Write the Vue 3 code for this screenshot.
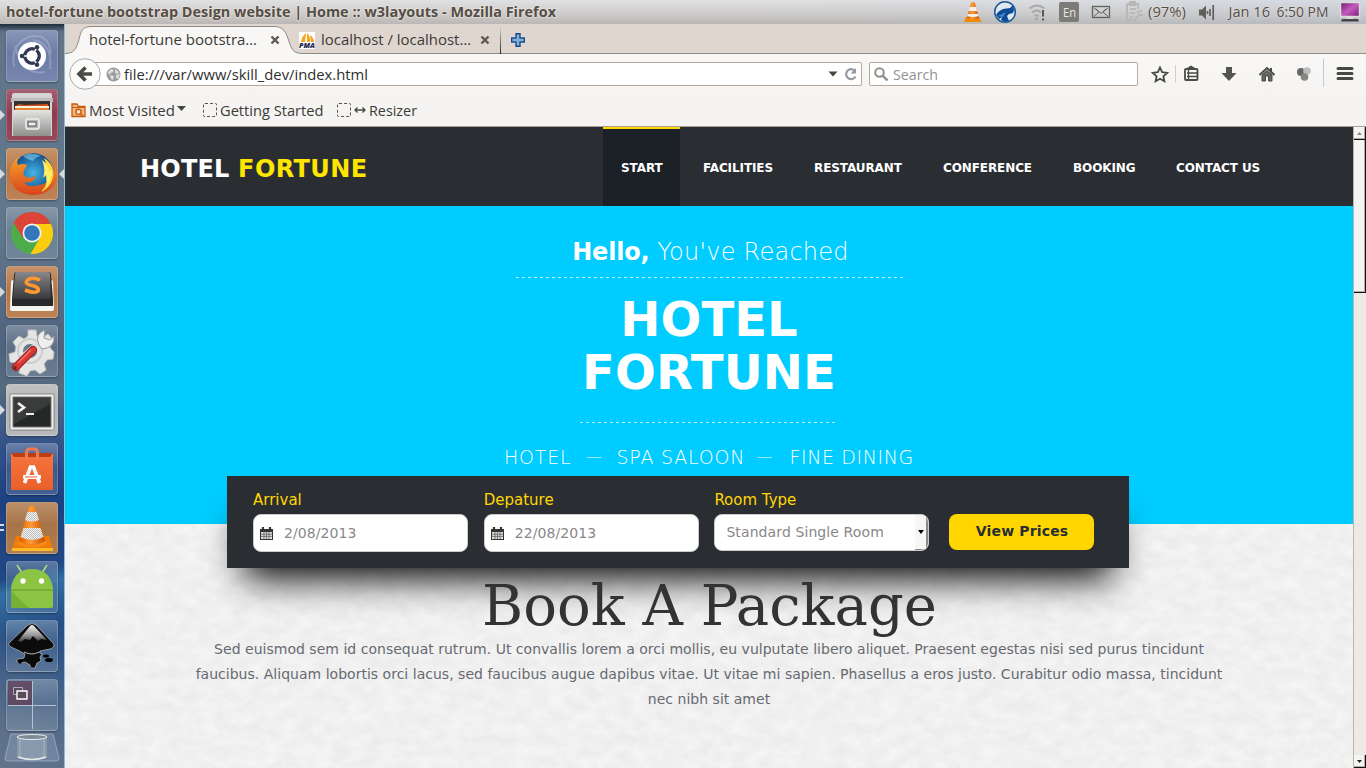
<script setup>
import { h } from 'vue'

const Fit = ({ text, w, size = 14.5, color = '#3c3b37', bold = false, ht = 20, halo = false }) =>
  h('svg', { width: w + 2, height: ht, style: { flex: 'none', display: 'block', overflow: 'visible' } }, [
    h('text', {
      x: 0, y: ht / 2 + 5, textLength: w, lengthAdjust: 'spacingAndGlyphs',
      fill: color, 'font-size': size, 'font-weight': bold ? 700 : 400,
      'font-family': '"Open Sans", "Noto Sans", sans-serif',
      ...(halo ? { stroke: '#f3e9e2', 'stroke-width': 1.6, 'paint-order': 'stroke', 'stroke-opacity': 0.6 } : {}),
    }, text),
  ])
Fit.props = ['text', 'w', 'size', 'color', 'bold', 'ht', 'halo']

const nav = ['START', 'FACILITIES', 'RESTAURANT', 'CONFERENCE', 'BOOKING', 'CONTACT US']
const navWidths = [77, 106, 124, 125, 98, 121]
const copy = [
  'Sed euismod sem id consequat rutrum. Ut convallis lorem a orci mollis, eu vulputate libero aliquet. Praesent egestas nisi sed purus tincidunt',
  'faucibus. Aliquam lobortis orci lacus, sed faucibus augue dapibus vitae. Ut vitae mi sapien. Phasellus a eros justo. Curabitur odio massa, tincidunt',
  'nec nibh sit amet',
]
</script>

<template>
  <div class="screen">
    <header class="panel">
      <Fit class="title" text="hotel-fortune bootstrap Design website | Home :: w3layouts - Mozilla Firefox" :w="550" :size="14" color="#544e46" :bold="true" :halo="true" />
      <svg class="tray" width="406" height="24" viewBox="960 0 406 24">
        <defs>
          <linearGradient id="cone" x1="0" x2="1"><stop offset="0" stop-color="#d95a00" /><stop offset=".45" stop-color="#ff9b36" /><stop offset="1" stop-color="#c64d00" /></linearGradient>
          <linearGradient id="monitor" x1="0" x2="1" y2="1"><stop offset="0" stop-color="#6d1a68" /><stop offset=".5" stop-color="#c45cc0" /><stop offset="1" stop-color="#7a1a70" /></linearGradient>
        </defs>
        <path d="M966 17h13l3 5h-18z" fill="#f58b0c" /><path d="M971 3q2-2 4 0l4 15q-6 3-12 0z" fill="url(#cone)" />
        <path d="M969.800 7h6.300l1 4h-8.300zM968 14h10l.7 2q-5.700 2-11.500 0z" fill="#f5f1ea" />
        <circle cx="1005" cy="12" r="10.300" fill="#dfe8ef" stroke="#1a5999" stroke-width="1.500" />
        <path d="M996 15q2-4 7-6l7-1 3-3 1 5-1 3-4 1-2 2 2 5q-5 2-8-1l1-3-3 2z" fill="#0d4b96" /><path d="M998 16l8-4-3 5z" fill="#4b86c5" />
        <g fill="none" stroke="#aaa7a7" stroke-width="1.800"><path d="M1029.500 8.500q7.500-6 15 0M1032 12.500q5-4 9 0M1034.500 16q2-1.500 4 0" /></g><circle cx="1036.500" cy="19" r="1.600" fill="#aaa7a7" /><path d="M1043 10v6.500M1043 18.500v2" stroke="#5b5853" stroke-width="2" />
        <rect x="1059" y="2" width="20" height="20" rx="2" fill="#7d7b78" />
        <g fill="none" stroke="#63605c" stroke-width="1.300"><rect x="1092.500" y="6.500" width="17" height="11" /><path d="M1094 8l5 4-5 4.500M1108 8l-5 4 5 4.500M1096 9l5 4.500 5-4.500" stroke-width="1" /></g>
        <g fill="none" stroke="#b9b8b6" stroke-width="2"><path d="M1127 4h11v5M1127 4v16h7M1130 3v-1h5v3h-5zM1130 9h6M1130 13h5M1130 17h2M1143 15l-4 0-5 6M1137 13l5-3" /></g>
        <path d="M1199 9.500h3l4-4v14l-4-4h-3z" fill="#625f5a" /><path d="M1207.500 11v3M1210 9v7M1213.200 5v15" stroke="#625f5a" stroke-width="1.700" />
        <rect x="1340.500" y="2.500" width="19" height="14" fill="url(#monitor)" stroke="#dcdbd9" stroke-width="1.500" /><path d="M1347 17h6v2h-6z" fill="#ddd" /><path d="M1342 19h16l1 2.500h-18z" fill="#444" />
        <g font-family="Open Sans, sans-serif" font-size="14" fill="#544e46" stroke="#f3e9e2" stroke-width="1.200" stroke-opacity=".5" paint-order="stroke">
          <text x="1063" y="17" textLength="13" lengthAdjust="spacingAndGlyphs" fill="#eceae7" stroke="none" font-size="13">En</text>
          <text x="1148" y="17" textLength="38" lengthAdjust="spacingAndGlyphs">(97%)</text>
          <text x="1228.500" y="17" textLength="41.500" lengthAdjust="spacingAndGlyphs">Jan 16</text>
          <text x="1276.500" y="17" textLength="52" lengthAdjust="spacingAndGlyphs">6:50 PM</text>
        </g>
      </svg>
    </header>

    <div class="desk">
      <aside class="launcher">
        <svg class="defs" width="0" height="0">
          <defs>
            <linearGradient id="steel" x2="0" y2="1"><stop offset="0" stop-color="#e4e4e2" /><stop offset="1" stop-color="#8f8f8d" /></linearGradient>
            <radialGradient id="globe"><stop offset="0" stop-color="#43b5e4" /><stop offset="1" stop-color="#15508e" /></radialGradient>
            <linearGradient id="fox" x2="0" y2="1"><stop offset="0" stop-color="#f8a12a" /><stop offset="1" stop-color="#d8431d" /></linearGradient>
            <linearGradient id="ink" x2="0" y2="1"><stop offset="0" stop-color="#eee" /><stop offset=".6" stop-color="#999" /><stop offset="1" stop-color="#333" /></linearGradient>
            <linearGradient id="key" x2="0" y2="1"><stop offset="0" stop-color="#88878a" /><stop offset="1" stop-color="#383739" /></linearGradient>
            <linearGradient id="bag" x2="0" y2="1"><stop offset="0" stop-color="#f5753f" /><stop offset="1" stop-color="#e95f2a" /></linearGradient>
            <pattern id="mesh" width="2" height="2" patternUnits="userSpaceOnUse"><rect width="2" height="2" fill="#f4f4f2" /><rect width="1" height="1" fill="#bcbcba" /><rect x="1" y="1" width="1" height="1" fill="#bcbcba" /></pattern>
          </defs>
        </svg>

        <div class="tile dash"><svg viewBox="0 0 52 52"><g fill="none" stroke="#c2cbdc" stroke-width="2" opacity=".35"><path d="M8 37Q4 14 23 7Q43 2 45 24M44 39Q47 13 27 10M9 16Q16 46 39 42" /></g><circle cx="26" cy="26" r="14" fill="#fff" /><circle cx="26" cy="26" r="7.200" fill="none" stroke="#303a52" stroke-width="3.500" /><path d="M26 26L16 26M26 26L31 17.300M26 26L31 34.700" stroke="#fff" stroke-width="1.600" /><circle cx="26" cy="26" r="5.400" fill="#fff" /><g fill="#303a52"><circle cx="16" cy="26" r="2.300" /><circle cx="31" cy="17.300" r="2.300" /><circle cx="31" cy="34.700" r="2.300" /></g></svg></div>

        <div class="tile files"><i class="mark"></i><svg viewBox="0 0 52 52"><path d="M6 6q0-2 2-2h36q2 0 2 2v41H6z" fill="#d4d4d2" /><path d="M5 9h42v4H5z" fill="#bebebc" /><path d="M8 12h36v10H8z" fill="#333" /><path d="M10 17l3-2 5 1 24-1v7H10z" fill="#d6521c" /><path d="M9 17h34v2H9z" fill="#fff3dc" /><path d="M9 19h34v2H9z" fill="#e48430" /><path d="M7 21h38v25q0 1-2 1H9q-2 0-2-1z" fill="url(#steel)" /><rect x="20" y="30" width="13" height="10" rx="2" fill="#b4b4b2" stroke="#eee" stroke-width="1.500" /><rect x="22" y="33" width="8" height="4" fill="#eee" stroke="#555" /></svg></div>

        <div class="tile firefox"><i class="mark"></i><i class="mark focus"></i><svg viewBox="0 0 52 52"><circle cx="27" cy="25" r="20" fill="url(#globe)" /><path d="M17 8q8-5 18 0-6 1-8 5-7-2-10-5z" fill="#7ed1ef" opacity=".6" /><path d="M13 9q-3 4-1 8 5-2 9 0l-3 6q-2 4 2 6 3 2 10-1-1 5-6 6-3 1-6 0 3 5 10 4 10-1 15-5l5-8 2-9 1 12c-1 10-10 19-23 19C13 47 3 38 4 25q0-7 4-11 2-4 5-5z" fill="url(#fox)" /><path d="M38 10q11 7 9 20-3 10-12 14 9-10 7-20l-3 3q3-9-1-17z" fill="#ffd83b" /><path d="M36 12q8 6 7 12l3-3q0 11-6 19 1-7 0-13l-3 3q3-8-1-18z" fill="#ffec67" /></svg></div>

        <div class="tile glass"><svg viewBox="0 0 52 52"><circle cx="26" cy="26" r="21" fill="#4cad4a" /><path d="M26 26L7.500 16A21 21 0 0 1 44.500 16z" fill="#db4437" /><path d="M26 17H45A21 21 0 0 1 24.500 47l10-17z" fill="#fbcd0e" /><path d="M7.500 16L17 31 26 26z" fill="#db4437" /><circle cx="26" cy="26" r="9.500" fill="#f3f3f3" /><circle cx="26" cy="26" r="7.800" fill="#3577bd" /></svg></div>

        <div class="tile sublime"><i class="mark"></i><svg viewBox="0 0 52 52"><path d="M5 16q0-2 2-2h38q2 0 2 2l1 27q0 2-2 2H6q-2 0-2-2z" fill="#f4f4f2" /><path d="M8 9q0-3 3-3h31q3 0 3 3l2 24v7H6v-7z" fill="#29292b" /><path d="M9 8q0-2 2-2h31q2 0 2 2l1 25H7z" fill="url(#key)" /><path d="M34 14q-6-3-11-1-6 4 1 6 10 2 8 6-4 3-13-1" fill="none" stroke="#ff9831" stroke-width="3.600" /></svg></div>

        <div class="tile glass"><svg viewBox="0 0 52 52"><path d="M22 5h8l1 6 5 2 6-4 5 6-4 5 2 4 3 3-1 7-6 1-3 4 2 6-6 4-5-4-5 1-3 5-8-3 1-6-4-4-6-1-1-8 6-2 1-5-3-5 6-6 5 3 4-3z" fill="#e5e5e3" stroke="#bfc0bf" /><circle cx="24" cy="26" r="12" fill="none" stroke="#cbcccb" stroke-width="2" /><circle cx="24" cy="26" r="7" fill="#667587" /><path d="M18 31L34 17" stroke="#ddd" stroke-width="6" /><path d="M33 20Q28 9 39 5l-1 8 6 2 4-4q1 12-12 13z" fill="#eee" stroke="#999" /><path d="M10 42L27 25" stroke="#982321" stroke-width="8" stroke-linecap="round" /><path d="M10 42L27 25" stroke="#d93732" stroke-width="6" stroke-linecap="round" /><path d="M12 38L25 25" stroke="#ef7470" stroke-width="1.500" /><circle cx="9" cy="43" r="1.700" fill="#65211f" /></svg></div>

        <div class="tile terminal"><i class="mark"></i><svg viewBox="0 0 52 52"><rect x="4" y="10" width="44" height="36" rx="1" fill="#f1f1f0" stroke="#888" /><rect x="7" y="13" width="38" height="30" fill="#262827" stroke="#777" /><path d="M8 14h36v6L8 40z" fill="#555" opacity=".45" /><path d="M12 19l6 4.500-6 4.500" fill="none" stroke="#eee" stroke-width="2.700" /><path d="M20 30h8" stroke="#eee" stroke-width="2" /></svg></div>

        <div class="tile glass"><svg viewBox="0 0 52 52"><path d="M5 10h42v37H5z" fill="url(#bag)" /><path d="M5 10h42l-3 4H8z" fill="#bd3e13" /><path d="M20.500 17v-7q0-4 3-4h5q3 0 3 4v7" fill="none" stroke="#eb7b56" stroke-width="3" /><path d="M18.500 40l6-16h3l6 16" fill="none" stroke="#fff" stroke-width="3.600" /><rect x="17" y="32" width="18" height="4" rx="1" fill="#fff" /><path d="M19 34h12" stroke="#e95f2a" /></svg></div>

        <div class="tile vlc"><i class="mark twin"></i><svg viewBox="0 0 52 52"><path d="M10 34h33l4 14H6z" fill="#ef7b08" /><path d="M6 46h41v3H6z" fill="#ffba28" /><path d="M23 5q3-3 6 0l10 34q-13 7-26 0z" fill="url(#cone)" /><path d="M21.500 10h9l2.500 8q-7 3-14 0zM17.500 26h17l3 9q-11.500 6-23 0z" fill="url(#mesh)" /><path d="M12 39q14 8 28 0l1 3q-15 7-30 0z" fill="#f68b15" /></svg></div>

        <div class="tile glass"><svg viewBox="0 0 52 52"><path d="M11 4l5 8M41 4l-5 8" stroke="#b5d978" stroke-width="1.600" /><path d="M5 29v-2Q8 8 26 8T47 27v18q0 2-2 2H7q-2 0-2-2z" fill="#8cc544" /><path d="M5 29h42" stroke="#67982f" /><path d="M5 30l18 17H7q-2 0-2-2z" fill="#76b034" /><circle cx="17" cy="20" r="2.700" fill="#fff" /><circle cx="35.500" cy="20" r="2.700" fill="#fff" /></svg></div>

        <div class="tile glass"><svg viewBox="0 0 52 52"><path d="M22 5q4-3 8 0l17 18q3 4-3 6l-10 2q-2 2 2 3l-2 3 1 4-4 2-2 5q-5 1-5-3l-5-3-6 1q-4-2-1-4l6-1 1-4q-7-4-14-7-4-2-1-5z" fill="#0b0b0c" stroke="#a8aeb6" stroke-width=".8" /><path d="M24 6q2-2 4 0l13 14-6-1-3 2-5-5-3 4-5-1-4 3-3-1z" fill="url(#ink)" /><path d="M18 32q8 4 15 0" stroke="#b9b9b9" fill="none" /><ellipse cx="40" cy="36" rx="3" ry="1.500" /><ellipse cx="43" cy="40" rx="4" ry="2" /><circle cx="14" cy="42" r="1.800" /></svg></div>

        <div class="tile glass"><svg viewBox="0 0 52 52"><path d="M2 2h24v24H2z" fill="#5d3b51" opacity=".75" /><path d="M26.500 2v48M2 26.500h48" stroke="#b5c2d4" stroke-width="1" /><path d="M7.500 8.500h9v7h-9z" fill="#59485b" stroke="#aab" /><path d="M11 12h10v8H11z" fill="#5c4a59" stroke="#fff" stroke-width="1.400" /></svg></div>
        <svg class="trash" width="56" height="31" viewBox="0 0 56 31"><path d="M7 2h42l6 24q0 3-3 3H4q-3 0-3-3z" fill="#91a5bd" fill-opacity=".4" stroke="#adc0d6" stroke-opacity=".6" /><path d="M13 4v22q15 4 30 0V4z" fill="#a2b2bf" fill-opacity=".45" /><path d="M16 7v19M40 7v19" stroke="#d8dfe5" opacity=".4" /><ellipse cx="28" cy="5" rx="15" ry="2.500" fill="#7b8c97" stroke="#eef0ea" /><path d="M14 25q14 5 28 0" stroke="#e6e9e6" stroke-width="1.600" fill="none" /></svg>
      </aside>

      <main class="browser">
        <div class="tabs">
          <svg class="tab-shape" width="1301" height="30" viewBox="0 0 1301 30"><path d="M0 29.500c9 0 11-4 14-14C16 6 18 2.500 27 2.500H209c9 0 12 5 15 15 3 9 5 12 14 12V31H0z" fill="#f8f7f5" /><path d="M0 29.500c9 0 11-4 14-14C16 6 18 2.500 27 2.500H209c9 0 12 5 15 15 3 9 5 12 14 12H1301" fill="none" stroke="#8f8a84" /></svg>
          <div class="tab one"><Fit text="hotel-fortune bootstra…" :w="168" :ht="22" /><svg width="10" height="10" viewBox="0 0 10 10"><path d="M1.500 1.500l7 7M8.500 1.500l-7 7" stroke="#5c5a56" stroke-width="2.400" /></svg></div>
          <div class="tab two">
            <svg width="17" height="17" viewBox="0 0 17 17"><rect width="16" height="17" fill="#fff" /><path d="M2 10Q3 4 7 1l-1 9zM8 10V1q4 4 3 9zM12 10l-1-7q4 3 4 7z" fill="#f6a41d" /><text x="0" y="16" textLength="16" lengthAdjust="spacingAndGlyphs" font-family="Open Sans,sans-serif" font-weight="800" font-style="italic" font-size="7" fill="#26264f">PMA</text></svg>
            <Fit text="localhost / localhost…" :w="150" :ht="22" />
            <svg width="10" height="10" viewBox="0 0 10 10"><path d="M1.500 1.500l7 7M8.500 1.500l-7 7" stroke="#5c5a56" stroke-width="2.400" /></svg>
          </div>
          <div class="divider"></div>
          <svg class="plus" width="14" height="14" viewBox="0 0 14 14"><path d="M5 .7h4V5h4.300v4H9v4.300H5V9H.7V5H5z" fill="#80b1e0" stroke="#1d4b88" stroke-width="1.400" /></svg>
        </div>

        <div class="toolbar">
          <svg class="back" width="32" height="32" viewBox="0 0 32 32"><circle cx="16" cy="16" r="15.300" fill="#fbfbfa" stroke="#a5a9ad" /><path d="M23 16H12M16.500 9.500L10 16l6.500 6.500" fill="none" stroke="#4a4a48" stroke-width="3.600" /></svg>
          <div class="url">
            <svg width="15" height="15" viewBox="0 0 15 15"><circle cx="7.500" cy="7.500" r="7" fill="#9a9d9f" /><path d="M2 5l3-3 3 1-1 2-2 1-2 2zM4 8l4 1-1 4-2-1zM9 2l4 3-1 2-3-1zM10 8l4-1-2 5-2-1z" fill="#dcdddd" /></svg>
            <Fit class="address" text="file:///var/www/skill_dev/index.html" :w="244" :ht="24" color="#30302e" />
            <svg class="drop" width="10" height="6" viewBox="0 0 10 6"><path d="M.5.500h9L5 5.500z" fill="#444" /></svg>
            <svg width="14" height="14" viewBox="0 0 14 14"><path d="M11.500 9.500a5 5 0 1 1-.5-5.500" fill="none" stroke="#929aa3" stroke-width="2.200" /><path d="M12 1v5.500H6.500z" fill="#929aa3" /></svg>
          </div>
          <div class="search"><svg width="14" height="14" viewBox="0 0 14 14"><circle cx="5.500" cy="5.500" r="4.300" fill="none" stroke="#8e8e8c" stroke-width="2" /><path d="M8.500 8.500l5 5" stroke="#8e8e8c" stroke-width="2.400" /></svg><Fit class="down" text="Search" :w="45" :ht="22" color="#929292" /></div>
          <svg class="actions" width="228" height="40" viewBox="1138 54 228 40">
            <path d="M1160 67.500l2.100 4.700 5.100.6-3.800 3.500 1 5-4.400-2.500-4.400 2.500 1-5-3.800-3.500 5.100-.6z" fill="none" stroke="#4a4a48" stroke-width="1.800" /><path d="M1175.500 65v18" stroke="#cfcecd" />
            <path d="M1187 68l4-2.500 4 2.500v2h-8z" fill="#4a4a48" /><rect x="1185" y="69" width="12.500" height="11" rx="1" fill="none" stroke="#4a4a48" stroke-width="1.800" /><path d="M1188.500 69v11M1187 73h10M1187 76.500h10" stroke="#4a4a48" stroke-width="1.300" />
            <path d="M1226 67h6v6h4.500l-7.500 8-7.500-8h4.500z" fill="#545452" /><path d="M1259.500 75l7.500-7 7.500 7" fill="none" stroke="#4a4a48" stroke-width="2" /><path d="M1262 75l5-4.500 5 4.500v6h-3.500v-5h-3v5h-3.500z" fill="#656563" stroke="#4a4a48" /><path d="M1270 68v4l2 1v-5z" fill="#4a4a48" />
            <circle cx="1301" cy="72" r="4" fill="#666" /><circle cx="1307" cy="71" r="3.800" fill="#bdbdbb" /><circle cx="1304.500" cy="77" r="3.800" fill="#858583" /><path d="M1323.500 59v28" stroke="#c4c8d0" /><path d="M1338 68.500h14M1338 73.500h14M1338 78.500h14" stroke="#474745" stroke-width="3" stroke-linecap="round" />
          </svg>
        </div>

        <div class="bookmarks">
          <svg width="15" height="15" viewBox="0 0 15 15"><path d="M1 13.500V1h5l1.500 2.500H14v10z" fill="#f5b67c" stroke="#c35c13" stroke-width="1.300" /><path d="M1 4.500h13" stroke="#c35c13" /><circle cx="7.500" cy="8.800" r="2.600" fill="#fbe3cc" stroke="#c35c13" stroke-width="1.400" /><path d="M9.500 10.800l2.500 2.200" stroke="#c35c13" stroke-width="1.500" /></svg>
          <Fit class="most down" text="Most Visited" :w="86" :ht="22" />
          <svg class="caret" width="9" height="5" viewBox="0 0 9 5"><path d="M0 0h9L4.500 5z" fill="#454543" /></svg>
          <i class="dots"></i><Fit class="started down" text="Getting Started" :w="103.500" :ht="22" />
          <i class="dots"></i>
          <svg class="arrows" width="12" height="8" viewBox="0 0 12 8"><path d="M1 4h10M3.500 1.500L1 4l2.500 2.500M8.500 1.500L11 4 8.500 6.500" fill="none" stroke="#444" stroke-width="1.300" /></svg>
          <Fit class="down" text="Resizer" :w="48" :ht="22" />
        </div>

        <div class="viewport">
          <div class="page">
            <nav class="nav">
              <div class="brand">HOTEL <b>FORTUNE</b></div>
              <div class="links"><a v-for="(n, i) in nav" :key="n" :class="{ active: i === 0 }" :style="{ width: navWidths[i] + 'px' }">{{ n }}</a></div>
            </nav>
            <section class="hero">
              <p class="hello"><b>Hello,</b> You've Reached</p>
              <div class="rule wide"></div>
              <h1>HOTEL<br />FORTUNE</h1>
              <div class="rule"></div>
              <p class="services"><span>HOTEL</span><span>—</span><span>SPA SALOON</span><span>—</span><span>FINE DINING</span></p>
              <form class="booking" @submit.prevent>
                <label>Arrival<span class="field"><svg width="13" height="13" viewBox="0 0 13 13"><path d="M0 2h13v11H0z" fill="#333" /><path d="M3 0v3M10 0v3" stroke="#333" stroke-width="2.200" /><path d="M1 5h11v7H1z" fill="#ddd" /><path d="M1 7.200h11M1 9.400h11M4 5v7M6.500 5v7M9 5v7" stroke="#555" stroke-width=".7" /></svg>2/08/2013</span></label>
                <label>Depature<span class="field"><svg width="13" height="13" viewBox="0 0 13 13"><path d="M0 2h13v11H0z" fill="#333" /><path d="M3 0v3M10 0v3" stroke="#333" stroke-width="2.200" /><path d="M1 5h11v7H1z" fill="#ddd" /><path d="M1 7.200h11M1 9.400h11M4 5v7M6.500 5v7M9 5v7" stroke="#555" stroke-width=".7" /></svg>22/08/2013</span></label>
                <label>Room Type<span class="field select"><span>Standard Single Room</span><i><svg width="6" height="4" viewBox="0 0 6 4"><path d="M0 0h6L3 4z" /></svg></i></span></label>
                <button>View Prices</button>
              </form>
            </section>
            <section class="package">
              <svg class="paper" width="1288" height="244"><filter id="grain" x="0" y="0" width="100%" height="100%" color-interpolation-filters="sRGB"><feTurbulence type="fractalNoise" baseFrequency=".06 .09" numOctaves="4" seed="7" /><feColorMatrix values="0 0 0 0 1  0 0 0 0 1  0 0 0 0 1  1.600 0 0 0 -.4" /></filter><rect width="1288" height="244" filter="url(#grain)" /></svg>
              <h2>Book A Package</h2>
              <p v-for="line in copy" :key="line">{{ line }}</p>
            </section>
          </div>
          <div class="scrollbar">
            <div class="step"><svg width="5" height="3" viewBox="0 0 5 3"><path d="M0 3l2.500-3L5 3z" fill="#8a8784" /></svg></div>
            <div class="thumb"></div>
            <div class="step end"><svg width="5" height="3" viewBox="0 0 5 3"><path d="M0 0h5L2.500 3z" fill="#222" /></svg></div>
          </div>
        </div>
      </main>
    </div>
  </div>
</template>

<style>
html, body { overflow: hidden; background: #f5f4f2; }
</style>

<style scoped>
* { box-sizing: border-box; }
svg { flex: none; display: block; }
p, h1, h2 { margin: 0; }
.screen { width: 1366px; height: 768px; display: flex; flex-direction: column; overflow: hidden; font-family: "DejaVu Sans", sans-serif; }
.panel { height: 24px; flex: none; display: flex; justify-content: space-between; padding: 2px 0 0 6px; background: linear-gradient(90deg, transparent 60%, #b4c6dc40), linear-gradient(#dfe0e2, #cfcdcc 55%, #bab7b6); }
.tray { margin-top: -2px; }
.desk { flex: 1; display: flex; min-height: 0; }
.launcher { width: 65px; height: 744px; flex: none; padding: 6px 0 0 6px; display: flex; flex-direction: column; gap: 7px; border-right: 1px solid #8ebfd0; background: linear-gradient(#1f2c3b 0, transparent 8px), radial-gradient(ellipse 90px 130px at 10px 740px, #62748a, transparent), linear-gradient(165deg, transparent 73%, #56b8e655 75%, transparent 81%), linear-gradient(#607687 0, #61778d 28%, #50637e 43%, #566b80 49%, #32518a 57%, #1d4282 64%, #214b83 78%, #3a5b88 89%, #5b6f8d 100%); }
.defs { position: absolute; }
.tile { position: relative; flex: none; width: 52px; height: 52px; border-radius: 4px; border: 1px solid #ffffff35; background-color: #8b9fb220; background-image: linear-gradient(#ffffff38, #ffffff08 45%, #ffffff1a); box-shadow: 0 1px 2px #0005; }
.tile > svg { width: 52px; height: 52px; margin: -1px; }
.dash { background-color: #6778a4; }
.files { background-color: #8b3449; }
.firefox, .sublime { background-color: #b57442; }
.terminal { background-color: #afb0b1; }
.vlc { background-color: #a66f3f; }
.mark { position: absolute; left: -7px; top: 20px; border: solid transparent; border-width: 5px 0 5px 5px; border-left-color: #d7dadd; }
.mark.focus { left: 52px; border-width: 5px 5px 5px 0; border-left-color: transparent; border-right-color: #d7dadd; }
.mark.twin { top: 21px; height: 7px; width: 4px; border: 0; border-top: 2px solid #d7dadd; border-bottom: 2px solid #d7dadd; }
.trash { margin: -6px 0 0 -2px; }
.browser { flex: 1; min-width: 0; display: flex; flex-direction: column; }
.tabs { position: relative; height: 30px; flex: none; background: #dfd6d0; display: flex; align-items: center; padding-top: 2px; }
.tab-shape { position: absolute; inset: 0; }
.tab { position: relative; display: flex; align-items: center; }
.one { margin-left: 24px; width: 210px; gap: 11px; }
.two { width: 201px; gap: 5px; }
.two svg:last-child { margin-left: 2px; }
.divider { width: 1px; height: 28px; background: linear-gradient(#2220, #222); position: relative; }
.plus { position: relative; margin-left: 10px; }
.toolbar { height: 40px; flex: none; display: flex; align-items: center; background: linear-gradient(#f9f8f7, #f5f4f2); }
.back { position: relative; z-index: 1; margin-left: 4px; }
.url { width: 778px; height: 24px; margin-left: -17px; display: flex; align-items: center; padding: 0 3px 0 21px; background: #fff; border: 1px solid #b5aa9d; border-radius: 2px; }
.address { margin-left: 3px; margin-top: 1px; }
.drop { margin: 0 6px 0 auto; }
.down { position: relative; top: 1px; }
.search { width: 269px; height: 24px; margin-left: 7px; display: flex; align-items: center; gap: 5px; padding-left: 4px; background: #fff; border: 1px solid #b5aa9d; border-radius: 2px; }
.bookmarks { height: 33px; flex: none; display: flex; align-items: center; padding-left: 6px; background: #f5f4f2; border-bottom: 1px solid #aaa093; }
.most { margin-left: 3px; }
.caret { margin: -3px 17px 0 0; }
.dots { width: 14px; height: 14px; flex: none; border: 1px dashed #555; border-radius: 2px; }
.started { margin: 0 11.5px 0 3px; }
.arrows { margin: 0 3px 0 3px; }
.viewport { flex: 1; min-height: 0; display: flex; }
.page { width: 1288px; overflow: hidden; }
.nav { height: 79px; background: #2a2e33; display: flex; padding-left: 75px; }
.brand { width: 463px; padding-top: 28px; line-height: 29px; font-size: 24px; font-weight: 700; letter-spacing: .2px; color: #fff; white-space: nowrap; }
.brand b { color: #ffe600; letter-spacing: .4px; }
.links { display: flex; gap: 5px; }
.links a { height: 79px; padding-left: 18px; line-height: 83px; font-size: 12px; font-weight: 700; letter-spacing: -.1px; color: #fff; white-space: nowrap; }
.links .active { background: #1b2127; line-height: 79px; border-top: 2px solid #ffd600; }
.hero { height: 318px; background: #0cf; display: flex; flex-direction: column; align-items: center; color: #fff; position: relative; z-index: 1; }
.hero > * { flex: none; }
.hello { padding-top: 30px; height: 71px; line-height: 32px; font-size: 24px; font-weight: 200; letter-spacing: .25px; padding-left: 3px; white-space: nowrap; }
.hello b { font-weight: 700; letter-spacing: -.2px; }
.rule { width: 256px; height: 1px; margin-left: -2px; background: repeating-linear-gradient(90deg, #b6f0ff 0 3px, transparent 3px 6px); }
.rule.wide { width: 387px; margin-left: 0; }
h1 { height: 144px; padding-top: 15px; font-size: 48px; line-height: 53px; letter-spacing: .1px; text-align: center; }
.services { display: flex; width: 410px; padding-top: 20px; height: 53px; line-height: 28px; font-size: 19px; font-weight: 200; letter-spacing: .8px; white-space: nowrap; }
.services span:nth-child(1) { width: 82px; }
.services span:nth-child(2) { width: 30.5px; font-size: 16px; }
.services span:nth-child(3) { width: 140px; }
.services span:nth-child(4) { width: 33px; font-size: 16px; }
.services span:last-child { letter-spacing: .6px; }
.booking { width: 902px; height: 92px; margin-left: -62px; background: #2a2e33; display: flex; padding: 15px 0 0 26px; box-shadow: 0 27px 37px -17px #000; }
label { width: 215px; margin-right: 15.7px; font-size: 15px; line-height: 18px; color: #ffd600; white-space: nowrap; }
.field { display: flex; align-items: center; width: 215px; height: 38px; margin-top: 5px; padding-left: 6px; border: 1px solid #ccc; border-radius: 8px; background: #fff; font-size: 14px; letter-spacing: .08px; color: #888; }
.field svg { margin-right: 11px; }
.field.select { height: 37px; padding: 0 0 0 11px; overflow: hidden; letter-spacing: .1px; }
.select span { padding-bottom: 2px; }
.select i { width: 13px; height: 37px; margin-left: auto; display: flex; align-items: center; padding-left: 3px; background: #f7f6f4; border-right: 2px solid #888; border-bottom: 2px solid #888; }
.select i svg { margin: 0; }
button { width: 145px; height: 36px; margin: 23px 0 0 3.5px; padding: 0 0 2px 2px; border: 0; border-radius: 8px; background: #ffd600; color: #2a2e33; font: 700 14px "DejaVu Sans", sans-serif; letter-spacing: .15px; }
.package { position: relative; height: 244px; padding-top: 49px; background: #ececec; text-align: center; }
.paper { position: absolute; inset: 0; opacity: .55; }
.package h2 { position: relative; z-index: 2; height: 64px; padding-left: 1px; font: 400 56px/66px "DejaVu Serif", serif; color: #333; }
.package p { position: relative; line-height: 25px; font-size: 14px; letter-spacing: .018px; color: #666a70; white-space: nowrap; }
.scrollbar { width: 13px; display: flex; flex-direction: column; background: #edeae6; border-left: 1px solid #bdb5ac; }
.step, .thumb { border-right: 1px solid #111; border-bottom: 1px solid #111; background: #f5f4f2; box-shadow: inset -1px -1px #b6aca0; }
.step { height: 13px; flex: none; display: grid; place-items: center; }
.thumb { height: 153px; flex: none; }
.end { margin-top: auto; }
</style>
